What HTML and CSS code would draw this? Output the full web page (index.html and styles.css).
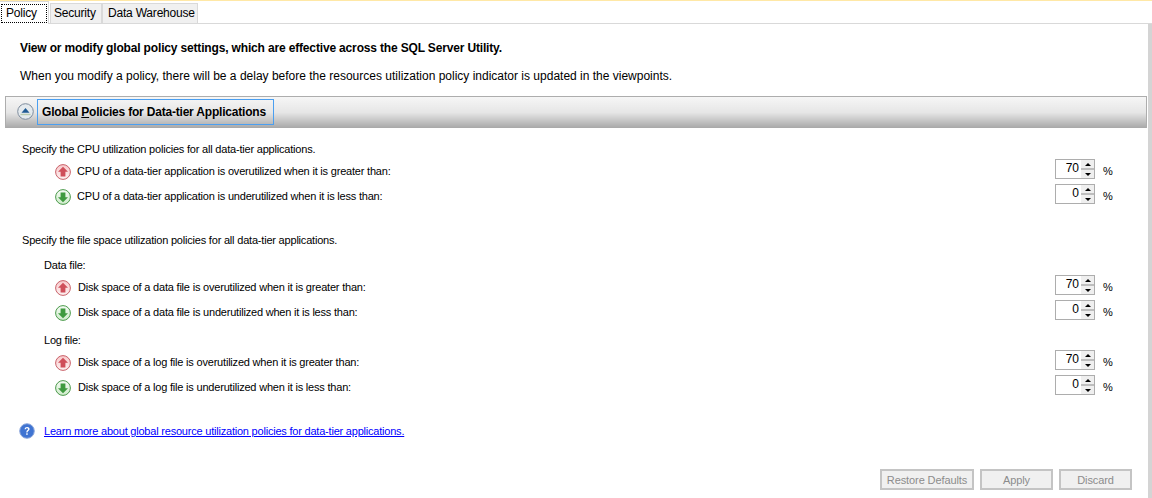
FILE: index.html
```html
<!DOCTYPE html>
<html lang="en">
<head>
    <meta charset="UTF-8">
    <title>Utility Administration - Policy</title>
    <link rel="stylesheet" href="styles.css">
</head>
<body>

<svg class="icon-defs" width="0" height="0">
    <defs>
        <linearGradient id="redFill" x1="0" y1="0" x2="0" y2="1">
            <stop offset="0" stop-color="#f8c8ca"/>
            <stop offset="1" stop-color="#fdf2f2"/>
        </linearGradient>
        <linearGradient id="greenFill" x1="0" y1="0" x2="0" y2="1">
            <stop offset="0" stop-color="#f4faf3"/>
            <stop offset="1" stop-color="#cfeccb"/>
        </linearGradient>
        <symbol id="iconUp" viewBox="0 0 16 16">
            <circle cx="8" cy="8" r="7.4" fill="url(#redFill)" stroke="#c9626a"/>
            <path d="M8 2.8 13 7.8H10.4V12.6H5.6V7.8H3Z" fill="#cf4f5a"/>
        </symbol>
        <symbol id="iconDown" viewBox="0 0 16 16">
            <circle cx="8" cy="8" r="7.4" fill="url(#greenFill)" stroke="#4c9a4c"/>
            <path d="M8 13.2 3 8.2H5.6V3.4H10.4V8.2H13Z" fill="#3f9a3f"/>
        </symbol>
    </defs>
</svg>

<div class="top-strip"></div>

<div class="tabs">
    <div class="tab active"><span class="tab-focus">Policy</span></div>
    <div class="tab tab-security">Security</div>
    <div class="tab tab-warehouse">Data Warehouse</div>
</div>

<div class="page">
    <div class="content">
        <p class="intro-bold">View or modify global policy settings, which are effective across the SQL Server Utility.</p>
        <p class="intro">When you modify a policy, there will be a delay before the resources utilization policy indicator is updated in the viewpoints.</p>

        <div class="section-bar">
            <span class="collapse-btn">
                <svg width="17" height="17" viewBox="0 0 17 17">
                    <circle cx="8.5" cy="8.5" r="7.8" fill="#e4eaee" stroke="#7d8b9c"/>
                    <path d="M8.5 5 12.5 9.8H4.5Z" fill="#1f5a94"/>
                    <path d="M3.5 10.8H13.5V12.2H3.5Z" fill="#b9cbb0"/>
                </svg>
            </span>
            <span class="section-title">Global <u>P</u>olicies for Data-tier Applications</span>
        </div>

        <div class="policies">
            <p class="lead lead-cpu">Specify the CPU utilization policies for all data-tier applications.</p>
            <div class="policy-row row-first">
                <svg class="state-icon"><use href="#iconUp"/></svg>
                <span class="policy-text">CPU of a data-tier application is overutilized when it is greater than:</span>
                <span class="spinner"><span class="spin-value">70</span><span class="spin-btns"><i class="up"></i><i class="down"></i></span></span>
                <span class="unit">%</span>
            </div>
            <div class="policy-row">
                <svg class="state-icon"><use href="#iconDown"/></svg>
                <span class="policy-text">CPU of a data-tier application is underutilized when it is less than:</span>
                <span class="spinner"><span class="spin-value">0</span><span class="spin-btns"><i class="up"></i><i class="down"></i></span></span>
                <span class="unit">%</span>
            </div>

            <p class="lead lead-file">Specify the file space utilization policies for all data-tier applications.</p>
            <p class="file-label label-data">Data file:</p>
            <div class="policy-row row-first row-disk">
                <svg class="state-icon"><use href="#iconUp"/></svg>
                <span class="policy-text">Disk space of a data file is overutilized when it is greater than:</span>
                <span class="spinner"><span class="spin-value">70</span><span class="spin-btns"><i class="up"></i><i class="down"></i></span></span>
                <span class="unit">%</span>
            </div>
            <div class="policy-row row-disk">
                <svg class="state-icon"><use href="#iconDown"/></svg>
                <span class="policy-text">Disk space of a data file is underutilized when it is less than:</span>
                <span class="spinner"><span class="spin-value">0</span><span class="spin-btns"><i class="up"></i><i class="down"></i></span></span>
                <span class="unit">%</span>
            </div>
            <p class="file-label label-log">Log file:</p>
            <div class="policy-row row-first row-disk">
                <svg class="state-icon"><use href="#iconUp"/></svg>
                <span class="policy-text">Disk space of a log file is overutilized when it is greater than:</span>
                <span class="spinner"><span class="spin-value">70</span><span class="spin-btns"><i class="up"></i><i class="down"></i></span></span>
                <span class="unit">%</span>
            </div>
            <div class="policy-row row-disk">
                <svg class="state-icon"><use href="#iconDown"/></svg>
                <span class="policy-text">Disk space of a log file is underutilized when it is less than:</span>
                <span class="spinner"><span class="spin-value">0</span><span class="spin-btns"><i class="up"></i><i class="down"></i></span></span>
                <span class="unit">%</span>
            </div>
        </div>

        <div class="help-row">
            <svg width="16" height="16" viewBox="0 0 16 16">
                <circle cx="8" cy="8" r="7.3" fill="#3f74d2" stroke="#8fa9dc"/>
                <path d="M5.6 6.2C5.7 4.7 6.8 4 8.1 4 9.6 4 10.6 4.8 10.6 6 10.6 7.6 8.6 7.7 8.5 9.4H7.3C7.3 7.4 9.1 7.2 9.1 6.1 9.1 5.5 8.7 5.2 8 5.2 7.3 5.2 7 5.6 6.9 6.2Z" fill="#fff"/>
                <rect x="7.2" y="10.3" width="1.5" height="1.5" fill="#fff"/>
            </svg>
            <a class="help-link" href="#">Learn more about global resource utilization policies for data-tier applications.</a>
        </div>

        <div class="actions">
            <button class="btn btn-restore" disabled>Restore Defaults</button>
            <button class="btn btn-apply" disabled>Apply</button>
            <button class="btn btn-discard" disabled>Discard</button>
        </div>
    </div>
    <div class="scroll-edge"></div>
</div>

</body>
</html>
```

FILE: styles.css
```css
html, body {
    margin: 0;
    padding: 0;
    height: 498px;
    overflow: hidden;
}

body {
    font-family: "Liberation Sans", Arial, sans-serif;
    font-size: 11px;
    letter-spacing: -0.2px;
    color: #000;
    background-color: #fff;
}

p {
    margin: 0;
}

.icon-defs {
    display: block;
    height: 0;
}

.top-strip {
    height: 1px;
    background-color: #ffe8a6;
}

/* tabs */
.tabs {
    display: flex;
    height: 23px;
    box-sizing: border-box;
    border-bottom: 1px solid #d9d9d9;
    font-size: 12px;
}

.tab {
    box-sizing: border-box;
    height: 20px;
    margin-top: 2px;
    padding: 2px 0 0 3px;
    line-height: 15px;
    background-color: #f0f0f0;
    border: 1px solid #d9d9d9;
    border-bottom: none;
}

.tab-security {
    width: 52px;
    margin-left: 1px;
}

.tab-warehouse {
    width: 96px;
    padding-left: 5px;
}

.tab.active {
    width: 49px;
    height: 23px;
    margin-top: 0;
    padding: 2px 1px 0;
    border-left: none;
    background-color: #fff;
}

.tab-focus {
    display: block;
    box-sizing: border-box;
    height: 19px;
    padding: 1px 0 0 4px;
    border: 1px dotted #000;
    line-height: 15px;
}

/* page */
.page {
    display: flex;
    height: 474px;
}

.content {
    flex: 1;
    padding: 0 1px 0 5px;
    display: flex;
    flex-direction: column;
}

.scroll-edge {
    width: 4px;
    background-color: #d4d4d4;
}

.intro-bold {
    margin: 17px 0 0 15px;
    font-size: 12px;
    font-weight: bold;
    letter-spacing: -0.16px;
    line-height: 15px;
}

.intro {
    margin: 13px 0 0 15px;
    font-size: 12px;
    letter-spacing: 0;
    line-height: 15px;
}

/* section bar */
.section-bar {
    box-sizing: border-box;
    height: 32px;
    margin-top: 12px;
    display: flex;
    align-items: flex-start;
    gap: 3px;
    padding-left: 11px;
    border: 1px solid #adadad;
    border-bottom: none;
    background: linear-gradient(#f6f6f6 0%, #e6e6e6 50%, #a8a8a8 100%);
}

.collapse-btn {
    display: flex;
    margin-top: 6px;
}

.section-title {
    box-sizing: border-box;
    width: 237px;
    height: 26px;
    margin-top: 2px;
    padding: 0 0 1px 4px;
    display: flex;
    align-items: center;
    white-space: pre;
    border: 1px solid #4b9ff0;
    font-size: 12px;
    font-weight: bold;
}

/* policies */
.policies {
    padding-left: 17px;
}

.lead {
    line-height: 14px;
}

.lead-cpu {
    margin-top: 14px;
}

.lead-file {
    margin-top: 28px;
}

.file-label {
    margin-left: 22px;
    line-height: 14px;
}

.label-data {
    margin-top: 11px;
}

.label-log {
    margin-top: 12px;
}

.policy-row {
    display: flex;
    align-items: flex-start;
    height: 22px;
    margin-top: 3px;
    padding-left: 33px;
    padding-right: 36px;
}

.row-first {
    margin-top: 2px;
}

.state-icon {
    width: 16px;
    height: 16px;
    margin-top: 6px;
    margin-right: 6px;
}

.policy-text {
    flex: 1;
    margin-top: 6px;
    line-height: 14px;
}

.row-disk .policy-text {
    margin-left: 1px;
}

.spinner {
    box-sizing: border-box;
    width: 40px;
    height: 20px;
    margin-top: 1px;
    display: flex;
    border: 1px solid #adadad;
    background-color: #fff;
}

.spin-value {
    flex: 1;
    text-align: right;
    font-size: 12px;
    letter-spacing: 0;
    line-height: 16px;
    padding-right: 2px;
}

.spin-btns {
    width: 13px;
    display: flex;
    flex-direction: column;
    gap: 2px;
    background-color: #bdbdbd;
}

.spin-btns i {
    flex: 1;
    display: flex;
    align-items: center;
    justify-content: center;
    background-color: #efefef;
}

.spin-btns i::before {
    content: "";
    border-left: 3px solid transparent;
    border-right: 3px solid transparent;
}

.spin-btns .up::before {
    border-bottom: 3px solid #000;
}

.spin-btns .down::before {
    border-top: 3px solid #000;
}

.unit {
    width: 8px;
    margin-left: 8px;
    margin-top: 6px;
    line-height: 14px;
}

/* help link */
.help-row {
    display: flex;
    align-items: center;
    gap: 9px;
    margin: 27px 0 0 14px;
}

.help-link {
    color: #0000ff;
    letter-spacing: -0.21px;
}

/* buttons */
.actions {
    display: flex;
    justify-content: flex-end;
    gap: 6px;
    margin-top: auto;
    margin-bottom: 8px;
    padding-right: 15px;
}

.btn {
    box-sizing: border-box;
    height: 21px;
    padding: 0;
    border: 2px solid #c4c4c4;
    background-color: #f0f0f0;
    color: #8c8c8c;
    font-family: inherit;
    font-size: 11px;
    letter-spacing: -0.1px;
}

.btn-restore {
    width: 94px;
}

.btn-apply {
    width: 73px;
}

.btn-discard {
    width: 73px;
}
```
